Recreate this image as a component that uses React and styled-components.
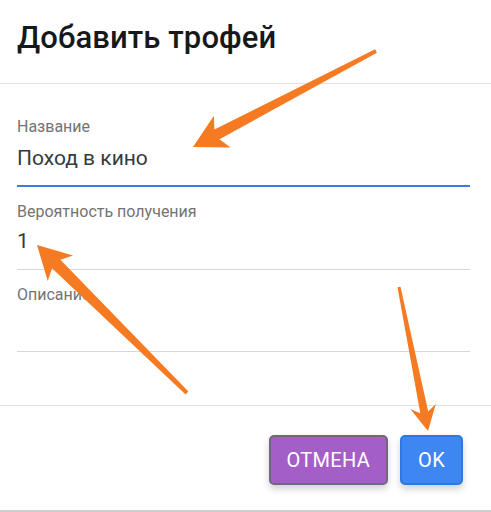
import React from "react";
import styled, { createGlobalStyle } from "styled-components";

const Global = createGlobalStyle`
  html, body { margin: 0; padding: 0; background: #ffffff; }
  body { font-family: Roboto, "Noto Sans", sans-serif; }
  * { box-sizing: border-box; }
`;

const Page = styled.div`
  position: relative;
  width: 491px;
  height: 512px;
  overflow: hidden;
  background: #fff;
  display: flex;
  flex-direction: column;
`;

const Header = styled.div`
  height: 84px;
  padding: 18px 0 0 17px;
  border-bottom: 1.5px solid #dfe3e7;
`;

const Title = styled.h1`
  margin: 0;
  font-family: Roboto, sans-serif;
  font-weight: 500;
  font-size: 31px;
  line-height: 40px;
  color: #15191c;
  letter-spacing: 0.1px;
`;

const Form = styled.div`
  height: 322px;
  padding: 33px 21px 0 17px;
  border-bottom: 1.5px solid #dfe3e7;
  display: flex;
  flex-direction: column;
`;

const Field = styled.div`
  display: flex;
  flex-direction: column;
  height: ${(p) => p.$h}px;
  border-bottom: ${(p) => (p.$active ? "2.5px solid #3a7ae3" : "1.5px solid #d3d8de")};
  margin-bottom: 15px;
`;

const Label = styled.div`
  font-size: 16px;
  line-height: 19px;
  color: #737373;
`;

const Value = styled.div`
  margin-top: ${(p) => p.$mt}px;
  font-size: 21px;
  line-height: 26px;
  color: #343a3f;
`;

const Footer = styled.div`
  flex: 1;
  display: flex;
  justify-content: flex-end;
  align-items: flex-start;
  gap: 12px;
  padding: 29px 28px 0 0;
  border-bottom: 2px solid #cfcfcf;
`;

const Button = styled.button`
  height: 50px;
  padding: 0 ${(p) => p.$px}px;
  border-radius: 5px;
  border: 2px solid ${(p) => p.$border};
  background: ${(p) => p.$bg};
  color: #fff;
  font-family: Roboto, sans-serif;
  font-size: 20px;
  font-weight: 400;
  letter-spacing: 0.3px;
  box-shadow: 0 4px 7px rgba(0, 0, 0, 0.18);
  cursor: pointer;
`;

const Overlay = styled.svg`
  position: absolute;
  left: 0;
  top: 0;
  width: 491px;
  height: 512px;
  pointer-events: none;
`;

function arrowPoints(tail, tip, w0, w1, headLen, headHalf) {
  const dx = tip[0] - tail[0];
  const dy = tip[1] - tail[1];
  const len = Math.hypot(dx, dy);
  const ux = dx / len, uy = dy / len;
  const nx = -uy, ny = ux;
  const neck = [tip[0] - ux * headLen, tip[1] - uy * headLen];
  const neckIn = [neck[0] + ux * 4, neck[1] + uy * 4];
  const p = (b, s, back = 0) => [b[0] + nx * s - ux * back, b[1] + ny * s - uy * back];
  const pts = [
    p(tail, w0 / 2),
    p(neckIn, w1 / 2),
    p(neck, headHalf, 2),
    tip,
    p(neck, -headHalf, 2),
    p(neckIn, -w1 / 2),
    p(tail, -w0 / 2),
  ];
  return pts.map((q) => q.map((v) => v.toFixed(1)).join(",")).join(" ");
}

const arrows = [
  { tail: [376, 51], tip: [193, 147], w0: 4, w1: 11, hl: 31, hh: 18 },
  { tail: [187, 393], tip: [37, 245], w0: 4, w1: 12, hl: 31, hh: 18 },
  { tail: [399, 287], tip: [428, 431], w0: 3, w1: 8, hl: 23, hh: 13 },
];

export default function App() {
  return (
    <Page>
      <Global />
      <Header>
        <Title>Добавить трофей</Title>
      </Header>
      <Form>
        <Field $h={70} $active>
          <Label>Название</Label>
          <Value $mt={9}>Поход в кино</Value>
        </Field>
        <Field $h={68}>
          <Label>Вероятность получения</Label>
          <Value $mt={7}>1</Value>
        </Field>
        <Field $h={67}>
          <Label>Описание</Label>
        </Field>
      </Form>
      <Footer>
        <Button $bg="#a35ec8" $border="#6d6a7c" $px={16}>ОТМЕНА</Button>
        <Button $bg="#3e86f1" $border="#2d78e6" $px={16}>OK</Button>
      </Footer>
      <Overlay viewBox="0 0 491 512">
        {arrows.map((a, i) => (
          <polygon
            key={i}
            points={arrowPoints(a.tail, a.tip, a.w0, a.w1, a.hl, a.hh)}
            fill="#f57a21"
          />
        ))}
      </Overlay>
    </Page>
  );
}
